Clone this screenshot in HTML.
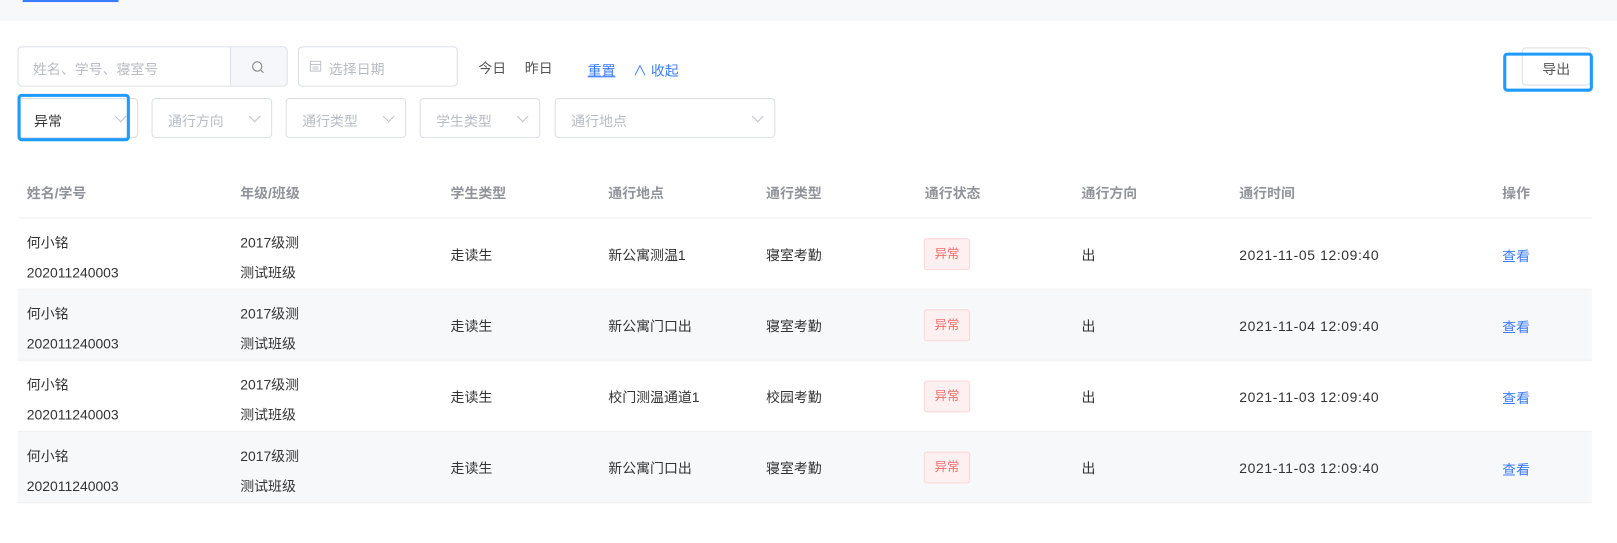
<!DOCTYPE html>
<html><head><meta charset="utf-8"><style>
*{box-sizing:border-box;margin:0;padding:0}
body{width:1617px;height:543px;background:#fff;font-family:"Liberation Sans","Noto Sans CJK SC",sans-serif;font-size:13.5px;color:#333;position:relative;overflow:hidden}
#w{position:absolute;left:0;top:0;width:1570px;height:527px;transform:scale(1.031);transform-origin:0 0}
.a{position:absolute}
.box{position:absolute;border:1px solid #dcdfe6;border-radius:4px;background:#fff}
.ph{color:#b8bcc4}
.sel{height:39px;top:95px}
.sel span{position:absolute;left:15px;top:10px}
.chev{position:absolute;right:12px;top:13px;width:8px;height:8px;border-right:1px solid #c0c4cc;border-bottom:1px solid #c0c4cc;transform:rotate(45deg)}
.row{position:absolute;left:17px;width:1527px;height:69px;border-bottom:1px solid #f0f0f0}
.g{background:#f7f8fa}
.c{position:absolute;line-height:29px}
.th{color:#909399;font-weight:bold;top:176px}
.tag{position:absolute;width:45px;height:31px;border:1px solid #fbd7d7;background:#fef0f0;color:#f56c6c;border-radius:3px;font-size:12px;text-align:center;line-height:29px}
.lnk{color:#3b7cff}
.d{letter-spacing:0.6px}
</style></head><body>
<div class="a" style="left:0;top:0;width:1617px;height:21px;background:#f7f8fa"></div>
<div id="w">
<div class="a" style="left:22px;top:0;width:93px;height:2px;background:#3b7cff"></div>

<div class="box" style="left:17px;top:45px;width:262px;height:39px"></div>
<div class="a" style="left:223px;top:46px;width:55px;height:37px;background:#f5f7fa;border-left:1px solid #dcdfe6;border-radius:0 4px 4px 0"></div>
<span class="a ph" style="left:32px;top:56px">姓名、学号、寝室号</span>
<svg class="a" style="left:243px;top:58px" width="14" height="14" viewBox="0 0 14 14"><circle cx="6.5" cy="6.5" r="4.5" fill="none" stroke="#888" stroke-width="1.1"/><path d="M10 10l2.5 2.5" stroke="#888" stroke-width="1.1"/></svg>
<div class="box" style="left:289px;top:45px;width:155px;height:39px"></div>
<svg class="a" style="left:300px;top:58px" width="12" height="12" viewBox="0 0 12 12"><rect x="1" y="1.5" width="10" height="9.5" fill="none" stroke="#c0c4cc"/><path d="M1 4.5h10M3 7h6M3 9h6" stroke="#c0c4cc"/></svg>
<span class="a ph" style="left:319px;top:56px">选择日期</span>
<span class="a" style="left:464px;top:55px;color:#555">今日</span>
<span class="a" style="left:509px;top:55px;color:#555">昨日</span>
<span class="a lnk" style="left:570px;top:57px;text-decoration:underline">重置</span>
<span class="a lnk" style="left:614px;top:57px">∧ 收起</span>

<div class="box" style="left:1476px;top:46px;width:67px;height:37px"></div>
<span class="a" style="left:1496px;top:56px;color:#555">导出</span>
<div class="a" style="left:1458px;top:51px;width:87px;height:38px;border:3px solid #1e9bff;border-radius:4px"></div>

<div class="box sel" style="left:17px;width:117px"><span style="color:#333">异常</span><i class="chev"></i></div>
<div class="a" style="left:17px;top:91px;width:109px;height:46px;border:3px solid #1e9bff;border-radius:4px"></div>
<div class="box sel" style="left:147px;width:117px"><span class="ph">通行方向</span><i class="chev"></i></div>
<div class="box sel" style="left:277px;width:117px"><span class="ph">通行类型</span><i class="chev"></i></div>
<div class="box sel" style="left:407px;width:117px"><span class="ph">学生类型</span><i class="chev"></i></div>
<div class="box sel" style="left:538px;width:214px"><span class="ph">通行地点</span><i class="chev"></i></div>

<div class="a" style="left:17px;top:211px;width:1527px;height:1px;background:#f0f0f0"></div>
<span class="a th" style="left:26px">姓名/学号</span>
<span class="a th" style="left:233px">年级/班级</span>
<span class="a th" style="left:437px">学生类型</span>
<span class="a th" style="left:590px">通行地点</span>
<span class="a th" style="left:743px">通行类型</span>
<span class="a th" style="left:897px">通行状态</span>
<span class="a th" style="left:1049px">通行方向</span>
<span class="a th" style="left:1202px">通行时间</span>
<span class="a th" style="left:1457px">操作</span>

<div class="row" style="top:212px"></div>
<div class="row g" style="top:281px"></div>
<div class="row" style="top:350px"></div>
<div class="row g" style="top:419px"></div>

<div class="a" style="left:0;top:221px;width:1570px">
<div class="c" style="left:26px;top:0">何小铭<br>202011240003</div><div class="c" style="left:233px;top:0">2017级测<br>测试班级</div>
<div class="c" style="left:437px;top:12px">走读生</div><div class="c" style="left:590px;top:12px">新公寓测温1</div><div class="c" style="left:743px;top:12px">寝室考勤</div>
<div class="tag" style="left:896px;top:10px">异常</div><div class="c" style="left:1049px;top:12px">出</div><div class="c d" style="left:1202px;top:12px">2021-11-05 12:09:40</div><div class="c lnk" style="left:1457px;top:13px">查看</div>
</div>
<div class="a" style="left:0;top:290px;width:1570px">
<div class="c" style="left:26px;top:0">何小铭<br>202011240003</div><div class="c" style="left:233px;top:0">2017级测<br>测试班级</div>
<div class="c" style="left:437px;top:12px">走读生</div><div class="c" style="left:590px;top:12px">新公寓门口出</div><div class="c" style="left:743px;top:12px">寝室考勤</div>
<div class="tag" style="left:896px;top:10px">异常</div><div class="c" style="left:1049px;top:12px">出</div><div class="c d" style="left:1202px;top:12px">2021-11-04 12:09:40</div><div class="c lnk" style="left:1457px;top:13px">查看</div>
</div>
<div class="a" style="left:0;top:359px;width:1570px">
<div class="c" style="left:26px;top:0">何小铭<br>202011240003</div><div class="c" style="left:233px;top:0">2017级测<br>测试班级</div>
<div class="c" style="left:437px;top:12px">走读生</div><div class="c" style="left:590px;top:12px">校门测温通道1</div><div class="c" style="left:743px;top:12px">校园考勤</div>
<div class="tag" style="left:896px;top:10px">异常</div><div class="c" style="left:1049px;top:12px">出</div><div class="c d" style="left:1202px;top:12px">2021-11-03 12:09:40</div><div class="c lnk" style="left:1457px;top:13px">查看</div>
</div>
<div class="a" style="left:0;top:428px;width:1570px">
<div class="c" style="left:26px;top:0">何小铭<br>202011240003</div><div class="c" style="left:233px;top:0">2017级测<br>测试班级</div>
<div class="c" style="left:437px;top:12px">走读生</div><div class="c" style="left:590px;top:12px">新公寓门口出</div><div class="c" style="left:743px;top:12px">寝室考勤</div>
<div class="tag" style="left:896px;top:10px">异常</div><div class="c" style="left:1049px;top:12px">出</div><div class="c d" style="left:1202px;top:12px">2021-11-03 12:09:40</div><div class="c lnk" style="left:1457px;top:13px">查看</div>
</div>
</div>
</body></html>
